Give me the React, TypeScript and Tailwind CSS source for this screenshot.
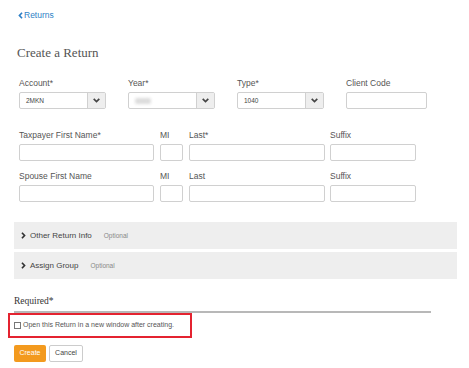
import React from "react";

const sans = { fontFamily: '"Liberation Sans", Arial, sans-serif' };
const serif = { fontFamily: '"Liberation Serif", "Times New Roman", serif' };

function ChevDown() {
  return (
    <svg width="7" height="5" viewBox="0 0 10 7">
      <path d="M1 1.2 L5 5 L9 1.2" fill="none" stroke="#444" strokeWidth="2.4" />
    </svg>
  );
}

function ChevRight({ color = "#333" }: { color?: string }) {
  return (
    <svg width="5" height="7" viewBox="0 0 7 10">
      <path d="M1.3 1 L5 5 L1.3 9" fill="none" stroke={color} strokeWidth="2.4" />
    </svg>
  );
}

function ChevLeft({ color = "#333" }: { color?: string }) {
  return (
    <svg width="5" height="7" viewBox="0 0 7 10">
      <path d="M5.7 1 L2 5 L5.7 9" fill="none" stroke={color} strokeWidth="2.4" />
    </svg>
  );
}

function Select({ value, blur }: { value: string; blur?: boolean }) {
  return (
    <div className="flex h-[17px] w-[87px] rounded-[2px] border border-[#d0d0d0] bg-white">
      <div className="flex flex-1 items-center pl-[6px] text-[6.5px] text-[#444]">
        {blur ? (
          <span className="inline-block h-[6px] w-[16px] rounded-[2px] bg-[#dcdcdc] blur-[1.5px]" />
        ) : (
          value
        )}
      </div>
      <div className="flex w-[18px] items-center justify-center border-l border-[#d0d0d0] bg-[#eeeeee]">
        <ChevDown />
      </div>
    </div>
  );
}

function Field({ label, w, children }: { label: string; w: number; children?: React.ReactNode }) {
  return (
    <div className="flex flex-col" style={{ width: w }}>
      <div className="mb-[4px] h-[10px] text-[8.5px] leading-[10px] text-[#555]">{label}</div>
      {children}
    </div>
  );
}

function Input({ w }: { w: number }) {
  return <div className="h-[17px] rounded-[2px] border border-[#d0d0d0] bg-white" style={{ width: w }} />;
}

function Accordion({ title, hint }: { title: string; hint: string }) {
  return (
    <div className="flex h-[27px] w-[443px] items-center bg-[#eeeeee] pl-[7px]">
      <ChevRight />
      <span className="ml-[4px] text-[8px] text-[#444]">{title}</span>
      <span className="ml-[12px] text-[6.5px] text-[#888]">{hint}</span>
    </div>
  );
}

export default function App() {
  return (
    <div className="h-[368px] w-[469px] overflow-hidden bg-white" style={sans}>
      <div className="flex items-center pl-[18px] pt-[10px] h-[20px]">
        <ChevLeft color="#2d7fc6" />
        <span className="ml-[1px] text-[8.5px] leading-[10px] text-[#2d7fc6]">Returns</span>
      </div>

      <div className="mt-[25px] pl-[17px] text-[13px] leading-[16px] text-[#555]" style={serif}>
        Create a Return
      </div>

      <div className="mt-[17px] flex gap-[22px] pl-[19px]">
        <Field label="Account*" w={87}>
          <Select value="2MKN" />
        </Field>
        <Field label="Year*" w={87}>
          <Select value="" blur />
        </Field>
        <Field label="Type*" w={87}>
          <Select value="1040" />
        </Field>
        <Field label="Client Code" w={81}>
          <Input w={81} />
        </Field>
      </div>

      <div className="mt-[21px] flex pl-[19px]">
        <Field label="Taxpayer First Name*" w={135}>
          <Input w={135} />
        </Field>
        <div className="w-[6px]" />
        <Field label="MI" w={23}>
          <Input w={23} />
        </Field>
        <div className="w-[6px]" />
        <Field label="Last*" w={136}>
          <Input w={136} />
        </Field>
        <div className="w-[5px]" />
        <Field label="Suffix" w={86}>
          <Input w={86} />
        </Field>
      </div>

      <div className="mt-[10px] flex pl-[19px]">
        <Field label="Spouse First Name" w={135}>
          <Input w={135} />
        </Field>
        <div className="w-[6px]" />
        <Field label="MI" w={23}>
          <Input w={23} />
        </Field>
        <div className="w-[6px]" />
        <Field label="Last" w={136}>
          <Input w={136} />
        </Field>
        <div className="w-[5px]" />
        <Field label="Suffix" w={86}>
          <Input w={86} />
        </Field>
      </div>

      <div className="mt-[20px] flex flex-col gap-[3px] pl-[14px]">
        <Accordion title="Other Return Info" hint="Optional" />
        <Accordion title="Assign Group" hint="Optional" />
      </div>

      <div className="ml-[14px] mt-[16px] w-[417px] border-b-2 border-[#b8b8b8] pb-[4px]">
        <div className="text-[9.5px] leading-[12px] text-[#333]" style={serif}>
          Required*
        </div>
      </div>

      <div className="ml-[8px] mt-[0px] flex h-[25px] w-[184px] items-center border-2 border-[#e42330] pl-[4px]">
        <span className="inline-block h-[7px] w-[7px] border border-[#777] bg-white" />
        <span className="ml-[2px] text-[7px] text-[#555]">Open this Return in a new window after creating.</span>
      </div>

      <div className="ml-[14px] mt-[7px] flex gap-[3px]">
        <div className="flex h-[17px] w-[32px] items-center justify-center rounded-[2px] bg-[#f39a1e] text-[7px] text-white">
          Create
        </div>
        <div className="flex h-[17px] w-[34px] items-center justify-center rounded-[2px] border border-[#ccc] bg-white text-[7px] text-[#444]">
          Cancel
        </div>
      </div>
    </div>
  );
}
